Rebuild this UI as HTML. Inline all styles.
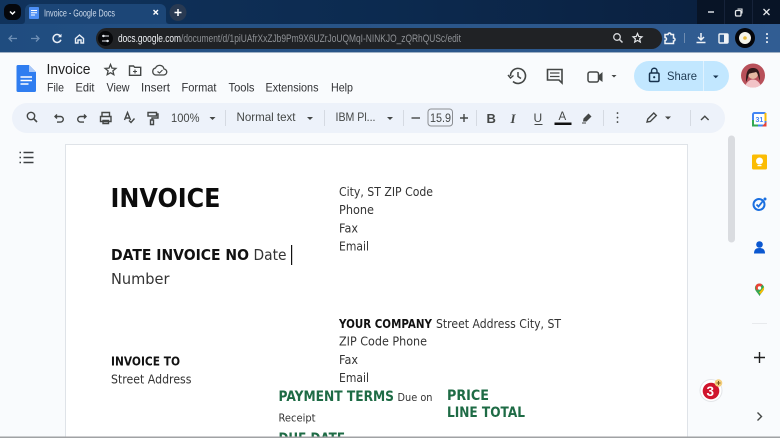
<!DOCTYPE html>
<html><head><meta charset="utf-8"><style>
html,body{margin:0;padding:0;width:780px;height:438px;overflow:hidden;background:#f9fbfd}
svg{display:block;position:absolute;left:0;top:0}
text{font-family:"Liberation Sans",sans-serif}
.d text{font-family:"DejaVu Sans",sans-serif}
</style></head><body>
<svg width="780" height="438" viewBox="0 0 780 438" xmlns="http://www.w3.org/2000/svg">
<defs>
<linearGradient id="tb" x1="0" y1="0" x2="1" y2="0"><stop offset="0" stop-color="#10335c"/><stop offset=".5" stop-color="#0c2a4f"/><stop offset="1" stop-color="#0a1e3c"/></linearGradient>
<linearGradient id="nb" x1="0" y1="0" x2="1" y2="0"><stop offset="0" stop-color="#1f4c7f"/><stop offset=".5" stop-color="#2a5588"/><stop offset="1" stop-color="#315d93"/></linearGradient>
</defs>
<!-- title bar -->
<rect width="780" height="25" fill="url(#tb)"/>
<rect x="697" width="83" height="24" fill="#081426"/>
<rect x="724" width="1" height="24" fill="#16233a"/><rect x="752" width="1" height="24" fill="#16233a"/>
<rect y="24" width="780" height="29" fill="url(#nb)"/>
<rect x="4" y="4" width="17" height="16" rx="6" fill="#05070c"/>
<path d="M10 11.500l2.500 2.500 2.500-2.500" fill="none" stroke="#fff" stroke-width="1.500"/>
<path d="M21 24c3 0 4-1 4-4V10a6 6 0 0 1 6-6h129a6 6 0 0 1 6 6v10c0 3 1 4 4 4z" fill="#1c4677"/>
<rect x="29" y="7" width="10" height="12" rx="1" fill="#4d8ff5"/>
<path d="M31 10.500h6M31 12.800h6M31 15h4" stroke="#fff" stroke-width="1"/>
<text x="44" y="16.500" font-size="10" fill="#cfdcec" textLength="71" lengthAdjust="spacingAndGlyphs">Invoice - Google Docs</text>
<path d="M153.500 10l4.500 4.500M158 10l-4.500 4.500" stroke="#fff" stroke-width="1.400"/>
<circle cx="178" cy="12.500" r="8.500" fill="#293a52"/>
<path d="M174.500 12.500h7M178 9v7" stroke="#fff" stroke-width="1.500"/>
<!-- nav -->
<path d="M17 38.500H9M12 35.500l-3 3 3 3" fill="none" stroke="#6e8fb5" stroke-width="1.300"/>
<path d="M31 38.500h8M36 35.500l3 3-3 3" fill="none" stroke="#6e8fb5" stroke-width="1.300"/>
<path d="M60.500 36.300a4 4 0 1 0 .4 3.400" fill="none" stroke="#e8eef6" stroke-width="1.500"/><path d="M61.500 33.800v3.500h-3.500z" fill="#e8eef6"/>
<path d="M75.500 38.500l4-3.500 4 3.500v4.500h-2.500v-3h-3v3h-2.500z" fill="none" stroke="#e8eef6" stroke-width="1.400"/>
<rect x="96" y="28" width="566" height="21" rx="10.500" fill="#202225"/>
<circle cx="105.500" cy="38.500" r="7.500" fill="#07080a"/>
<path d="M102 36h7M102 41h7" stroke="#e4e8ee" stroke-width="1"/><circle cx="103.500" cy="36" r="1.200" fill="#e4e8ee"/><circle cx="107.500" cy="41" r="1.200" fill="#e4e8ee"/>
<text x="118" y="42" font-size="11" fill="#f0f2f5" textLength="63" lengthAdjust="spacingAndGlyphs">docs.google.com</text>
<text x="181" y="42" font-size="11" fill="#8f9296" textLength="280" lengthAdjust="spacingAndGlyphs">/document/d/1piUAfrXxZJb9Pm9X6UZrJoUQMqI-NINKJO_zQRhQUSc/edit</text>
<circle cx="617" cy="37" r="3.300" fill="none" stroke="#d5d7da" stroke-width="1.300"/><path d="M619.500 39.500l3 3" stroke="#d5d7da" stroke-width="1.500"/>
<path d="M637.500 33.500l1.300 3 3.200.3-2.400 2.100.7 3.100-2.800-1.600-2.800 1.600.7-3.100-2.400-2.100 3.200-.3z" fill="none" stroke="#e4e6e9" stroke-width="1.200"/>
<path d="M665 34.500h3a1.500 1.500 0 0 1 3 0h2.500v3.500a1.500 1.500 0 0 1 0 3v2.500H665v-3a1.500 1.500 0 0 0 0-3z" fill="none" stroke="#f0f3f7" stroke-width="1.500"/>
<rect x="684" y="33" width="1" height="10" fill="#6f8cb0"/>
<path d="M701 33v6.500M698 37l3 3 3-3M696.500 42.500h9" fill="none" stroke="#f0f3f7" stroke-width="1.500"/>
<rect x="719" y="34" width="9" height="9" rx="1" fill="none" stroke="#f0f3f7" stroke-width="1.400"/><rect x="724" y="34" width="4" height="9" fill="#f0f3f7"/>
<circle cx="745" cy="38" r="10" fill="#05060a"/><circle cx="745" cy="38" r="6" fill="#f6f4ea"/><circle cx="745" cy="38" r="1.800" fill="#e7b938"/>
<path d="M767 34v.1M767 38v.1M767 42v.1" stroke="#eef2f7" stroke-width="2" stroke-linecap="round"/>
<!-- window buttons -->
<path d="M708 12h6" stroke="#d8dce2" stroke-width="1.500"/>
<rect x="735.500" y="10.500" width="5.500" height="5.500" rx="1.300" fill="none" stroke="#e4e7ea" stroke-width="1.300"/><path d="M737.500 9h4.500v4.500" fill="none" stroke="#e4e7ea" stroke-width="1.100"/>
<path d="M763.500 9l6 6M769.500 9l-6 6" stroke="#e4e7ea" stroke-width="1.300"/>
<rect x="0" y="52" width="780" height="1.500" fill="#9fb0c4"/>
<!-- docs header -->
<rect y="53" width="780" height="385" fill="#f9fbfd"/>
<path d="M18 65h11l7 7v18.500a1.500 1.500 0 0 1-1.500 1.500H18a1.500 1.500 0 0 1-1.500-1.500V66.500A1.500 1.500 0 0 1 18 65z" fill="#2f7df0"/>
<path d="M29 65l7 7h-7z" fill="#a9c8f8"/>
<path d="M20.500 77h11.500M20.500 80.500h11.500M20.500 84h8" stroke="#fff" stroke-width="1.500"/>
<text x="46.500" y="74" font-size="15" fill="#1f1f1f" textLength="44" lengthAdjust="spacingAndGlyphs">Invoice</text>
<path d="M110.500 64.500l1.500 3.600 3.900.3-3 2.500.9 3.800-3.300-2-3.300 2 .9-3.800-3-2.500 3.900-.3z" fill="none" stroke="#444746" stroke-width="1.300"/>
<path d="M129.500 66h4l1.200 1.300h6v8h-11.200z" fill="none" stroke="#444746" stroke-width="1.400"/><path d="M133 71.500h4M135 69.500v4" stroke="#444746" stroke-width="1.100"/>
<path d="M155.500 75h8a3 3 0 0 0 .5-6 4.500 4.500 0 0 0-8.500-1 3.600 3.600 0 0 0 0 7z" fill="none" stroke="#444746" stroke-width="1.300"/><path d="M157.500 71.500l2 1.500 3-3" fill="none" stroke="#444746" stroke-width="1.100"/>
<g font-size="12" fill="#303134">
<text x="47" y="91.500" textLength="17" lengthAdjust="spacingAndGlyphs">File</text>
<text x="75.500" y="91.500" textLength="19" lengthAdjust="spacingAndGlyphs">Edit</text>
<text x="106.500" y="91.500" textLength="23" lengthAdjust="spacingAndGlyphs">View</text>
<text x="141" y="91.500" textLength="29" lengthAdjust="spacingAndGlyphs">Insert</text>
<text x="181.500" y="91.500" textLength="35" lengthAdjust="spacingAndGlyphs">Format</text>
<text x="228.500" y="91.500" textLength="26" lengthAdjust="spacingAndGlyphs">Tools</text>
<text x="265.500" y="91.500" textLength="53" lengthAdjust="spacingAndGlyphs">Extensions</text>
<text x="331" y="91.500" textLength="22" lengthAdjust="spacingAndGlyphs">Help</text>
</g>
<!-- top right -->
<path d="M510.500 76a7.500 7.500 0 1 1 2.500 5.500" fill="none" stroke="#444746" stroke-width="1.600"/><path d="M508 75l2.500 3 3-2.500" fill="none" stroke="#444746" stroke-width="1.400"/><path d="M518 72v4.500l3 2" fill="none" stroke="#444746" stroke-width="1.500"/>
<path d="M547.500 69.500h14.500v13.500l-3-3h-11.500z" fill="none" stroke="#444746" stroke-width="1.600"/><path d="M550 73h9.500M550 76.500h9.500" stroke="#444746" stroke-width="1.300"/>
<rect x="588" y="72" width="10.500" height="10" rx="2" fill="none" stroke="#444746" stroke-width="1.500"/><path d="M598.500 75.500l4-3.500v10l-4-3z" fill="#444746"/>
<path d="M611.500 75h5l-2.500 2.500z" fill="#444746"/>
<path d="M649 61h54v30h-54a15 15 0 0 1 0-30z" fill="#c2e7ff"/>
<path d="M704 61h10a15 15 0 0 1 0 30h-10z" fill="#c2e7ff"/><rect x="703" y="61" width="1" height="30" fill="#e0f2ff"/>
<rect x="649.500" y="73" width="9.500" height="8.500" rx="1.200" fill="none" stroke="#17324d" stroke-width="1.500"/><path d="M651.500 73v-2a2.700 2.700 0 0 1 5.500 0v2" fill="none" stroke="#17324d" stroke-width="1.400"/><circle cx="654.200" cy="77.200" r="1.100" fill="#17324d"/>
<text x="667" y="80" font-size="12" fill="#1f3a52" textLength="30" lengthAdjust="spacingAndGlyphs">Share</text>
<path d="M713 75.500h5.500l-2.750 2.800z" fill="#17324d"/>
<circle cx="753" cy="75.500" r="12" fill="#b8505a"/>
<circle cx="753" cy="74" r="5" fill="#e5b9a3"/><path d="M746 82c0-9 1-14 7-14s7 5 7 13c-2-4-2-8-4-9-3 1-6 1-7 2-1 2-1 5-3 8z" fill="#32191b"/><path d="M745.500 85c2-4 5-5.500 7.500-5.500s5.500 1.500 7.500 5.500c-4 3.500-11 3.500-15 0z" fill="#f2c3c7"/>
<!-- toolbar -->
<rect x="12" y="103" width="713" height="30" rx="15" fill="#edf2fa"/>
<g fill="none" stroke="#444746" stroke-width="1.400">
<circle cx="31" cy="116" r="3.700"/><path d="M33.700 118.700l3.300 3.300" stroke-width="1.600"/>
<path d="M55 116.500h5.500a2.800 2.800 0 0 1 0 5.600H57M57 114.500l-2 2 2 2"/>
<path d="M86 116.500h-5.500a2.800 2.800 0 0 0 0 5.600H84M84 114.500l2 2-2 2"/>
<path d="M102 116.500v-4h7.500v4M100.500 116.500h10.500v5h-10.500zM103 120.500h5.500v3H103z"/>
<path d="M124.500 120l3-7.500 3 7.500M125.500 118h4M129 120.500l2 2 3.500-4"/>
<path d="M148 112.500h8.500v3.500H148zM156.500 114h1.500v4h-6v2M150.500 120h3v4.500h-3z"/>
</g>
<text x="171" y="122" font-size="12" fill="#444746" textLength="28.500" lengthAdjust="spacingAndGlyphs">100%</text>
<path d="M209.500 117h6l-3 3z" fill="#444746"/>
<rect x="225" y="110" width="1" height="16" fill="#d5dae2"/>
<text x="236.500" y="121" font-size="12" fill="#444746" textLength="59" lengthAdjust="spacingAndGlyphs">Normal text</text>
<path d="M307 117h6l-3 3z" fill="#444746"/>
<rect x="324" y="110" width="1" height="16" fill="#d5dae2"/>
<text x="335.500" y="121" font-size="12" fill="#444746" textLength="40" lengthAdjust="spacingAndGlyphs">IBM Pl...</text>
<path d="M387 117h6l-3 3z" fill="#444746"/>
<rect x="403" y="110" width="1" height="16" fill="#d5dae2"/>
<path d="M411.500 118h8.500" stroke="#444746" stroke-width="1.400"/>
<rect x="428" y="109" width="24.500" height="17" rx="3" fill="none" stroke="#8b8e92" stroke-width="1"/>
<text x="430" y="122" font-size="12" fill="#444746" textLength="21" lengthAdjust="spacingAndGlyphs">15.9</text>
<path d="M460 118h8M464 114v8" stroke="#444746" stroke-width="1.400"/>
<rect x="476" y="110" width="1" height="16" fill="#d5dae2"/>
<text x="486.500" y="123" font-size="13" font-weight="bold" fill="#444746">B</text>
<text x="510.500" y="123" font-size="13" font-weight="bold" font-style="italic" fill="#444746" style="font-family:'Liberation Serif',serif">I</text>
<text x="533.500" y="122" font-size="12" fill="#444746">U</text><rect x="534.500" y="124" width="8" height="1" fill="#444746"/>
<text x="558.500" y="120" font-size="11.500" fill="#444746">A</text><rect x="554.500" y="122.500" width="17" height="2.500" fill="#111"/>
<path d="M583.500 118.500l5-5 3 3-5 5h-3.500z" fill="#444746"/><path d="M582 123h4" stroke="#444746"/>
<rect x="603" y="110" width="1" height="16" fill="#d5dae2"/>
<path d="M617.500 113v.1M617.500 117.500v.1M617.500 122v.1" stroke="#444746" stroke-width="1.800" stroke-linecap="round"/>
<path d="M647 122l.8-3 6-6 2.500 2.500-6 6z" fill="none" stroke="#444746" stroke-width="1.400"/>
<path d="M665 116.500h6l-3 3z" fill="#444746"/>
<rect x="690" y="110" width="1" height="16" fill="#d5dae2"/>
<path d="M701 120l3.800-3.800 3.800 3.800" fill="none" stroke="#444746" stroke-width="1.400"/>
<!-- outline icon -->
<path d="M23.500 152.500h10M23.500 157.500h10M23.500 162.500h10" stroke="#3c4043" stroke-width="1.500"/><path d="M19.500 152.500h1.500M19.500 157.500h1.500M19.500 162.500h1.500" stroke="#3c4043" stroke-width="1.500"/>
<!-- page -->
<rect x="65.500" y="144.500" width="622" height="300" fill="#fff" stroke="#dfe3e8" stroke-width="1"/>
<g class="d" fill="#1a1a1a">
<text x="110.500" y="207" font-size="26" font-weight="bold" fill="#0c0c0c" textLength="110" lengthAdjust="spacingAndGlyphs">INVOICE</text>
<text x="339" y="196" font-size="12" fill="#333" textLength="94" lengthAdjust="spacingAndGlyphs">City, ST ZIP Code</text>
<text x="339" y="214" font-size="12" fill="#333" textLength="35" lengthAdjust="spacingAndGlyphs">Phone</text>
<text x="339" y="232.500" font-size="12" fill="#333" textLength="19" lengthAdjust="spacingAndGlyphs">Fax</text>
<text x="339" y="250.500" font-size="12" fill="#333" textLength="30" lengthAdjust="spacingAndGlyphs">Email</text>
<text x="111" y="260" font-size="15.500" font-weight="bold" fill="#111" textLength="138" lengthAdjust="spacingAndGlyphs">DATE INVOICE NO</text>
<text x="253.500" y="260" font-size="15.500" fill="#333" textLength="33" lengthAdjust="spacingAndGlyphs">Date</text>
<rect x="291" y="245" width="1.200" height="20" fill="#111"/>
<text x="111" y="284" font-size="15.500" fill="#333" textLength="58.500" lengthAdjust="spacingAndGlyphs">Number</text>
<text x="339" y="328" font-size="12" font-weight="bold" fill="#111" textLength="93" lengthAdjust="spacingAndGlyphs">YOUR COMPANY</text>
<text x="436" y="328" font-size="12" fill="#333" textLength="125" lengthAdjust="spacingAndGlyphs">Street Address City, ST</text>
<text x="339" y="345.500" font-size="12" fill="#333" textLength="88" lengthAdjust="spacingAndGlyphs">ZIP Code Phone</text>
<text x="339" y="364" font-size="12" fill="#333" textLength="19" lengthAdjust="spacingAndGlyphs">Fax</text>
<text x="339" y="382" font-size="12" fill="#333" textLength="30" lengthAdjust="spacingAndGlyphs">Email</text>
<text x="111" y="365.500" font-size="12" font-weight="bold" fill="#111" textLength="69" lengthAdjust="spacingAndGlyphs">INVOICE TO</text>
<text x="111" y="383.500" font-size="12" fill="#333" textLength="80.500" lengthAdjust="spacingAndGlyphs">Street Address</text>
<text x="278.500" y="401" font-size="14" font-weight="bold" fill="#1e6b45" textLength="115.500" lengthAdjust="spacingAndGlyphs">PAYMENT TERMS</text>
<text x="397.500" y="401" font-size="11" fill="#333" textLength="35" lengthAdjust="spacingAndGlyphs">Due on</text>
<text x="278.500" y="421.500" font-size="11" fill="#333" textLength="37" lengthAdjust="spacingAndGlyphs">Receipt</text>
<text x="447" y="400" font-size="14" font-weight="bold" fill="#1e6b45" textLength="42" lengthAdjust="spacingAndGlyphs">PRICE</text>
<text x="447" y="417" font-size="14" font-weight="bold" fill="#1e6b45" textLength="78" lengthAdjust="spacingAndGlyphs">LINE TOTAL</text>
<text x="278.500" y="443" font-size="14" font-weight="bold" fill="#1e6b45" textLength="66.500" lengthAdjust="spacingAndGlyphs">DUE DATE</text>
</g>
<!-- scrollbar -->
<rect x="728" y="135.500" width="7" height="107" rx="3.500" fill="#dadce0"/>
<!-- side panel -->
<rect x="753" y="113" width="12.500" height="12.500" rx="1.500" fill="#fff" stroke="#4285f4" stroke-width="2"/>
<path d="M753 120v5.500h5" fill="none" stroke="#34a853" stroke-width="2"/><path d="M762 126.500h4.500v-5z" fill="#ea4335"/><path d="M765.500 113v8" stroke="#fbbc04" stroke-width="2"/>
<text x="755.500" y="122" font-size="7" font-weight="bold" fill="#4285f4">31</text>
<rect x="752" y="154.500" width="15" height="15" rx="1.500" fill="#fbbc04"/>
<circle cx="759.500" cy="161" r="3.500" fill="#fff"/><rect x="757.500" y="165" width="4" height="1.200" fill="#fff"/>
<circle cx="759" cy="204.500" r="5.500" fill="none" stroke="#1a6fe0" stroke-width="2"/><path d="M756.500 204.500l2 2 4-5" fill="none" stroke="#1a6fe0" stroke-width="1.800"/><circle cx="765" cy="199" r="1.500" fill="#1a6fe0"/>
<circle cx="759.500" cy="244.500" r="3.300" fill="#0b57d0"/><path d="M754 253.500c0-4 2-5.500 5.500-5.500s5.500 1.500 5.500 5.500z" fill="#0b57d0"/>
<path d="M759.500 283.500a4.600 4.600 0 0 1 4.600 4.600c0 3-3 4.500-4.600 8-1.600-3.500-4.600-5-4.600-8a4.600 4.600 0 0 1 4.600-4.600z" fill="#34a853"/>
<path d="M756 285a4.600 4.600 0 0 1 6.500-.2l-5.500 5.800-1.500-2.500z" fill="#ea4335"/><path d="M764 287l-5 5.500 1.500 1.500c1.500-2 3.600-3.500 3.600-5.900z" fill="#fbbc04"/><circle cx="759.500" cy="288" r="1.700" fill="#fff"/>
<rect x="752" y="323" width="15" height="1" fill="#e8eaed"/>
<path d="M754 357.500h11M759.500 352v11" stroke="#1f1f1f" stroke-width="1.400"/>
<path d="M757.500 412.500l4 4-4 4" fill="none" stroke="#444746" stroke-width="1.400"/>
<!-- badge -->
<circle cx="711" cy="390.500" r="11" fill="#fff" stroke="#e3e5e8"/>
<circle cx="711" cy="391" r="8.300" fill="#d0142c"/>
<text x="706.500" y="396" font-size="13.500" font-weight="bold" fill="#fff">3</text>
<circle cx="718.500" cy="383" r="3.800" fill="#f4cf7c"/><path d="M716.500 383h4M718.500 381v4" stroke="#7a5a1c" stroke-width="1"/>
<rect y="436.500" width="780" height="1.500" fill="#a0a2a4"/>
</svg>
</body></html>
